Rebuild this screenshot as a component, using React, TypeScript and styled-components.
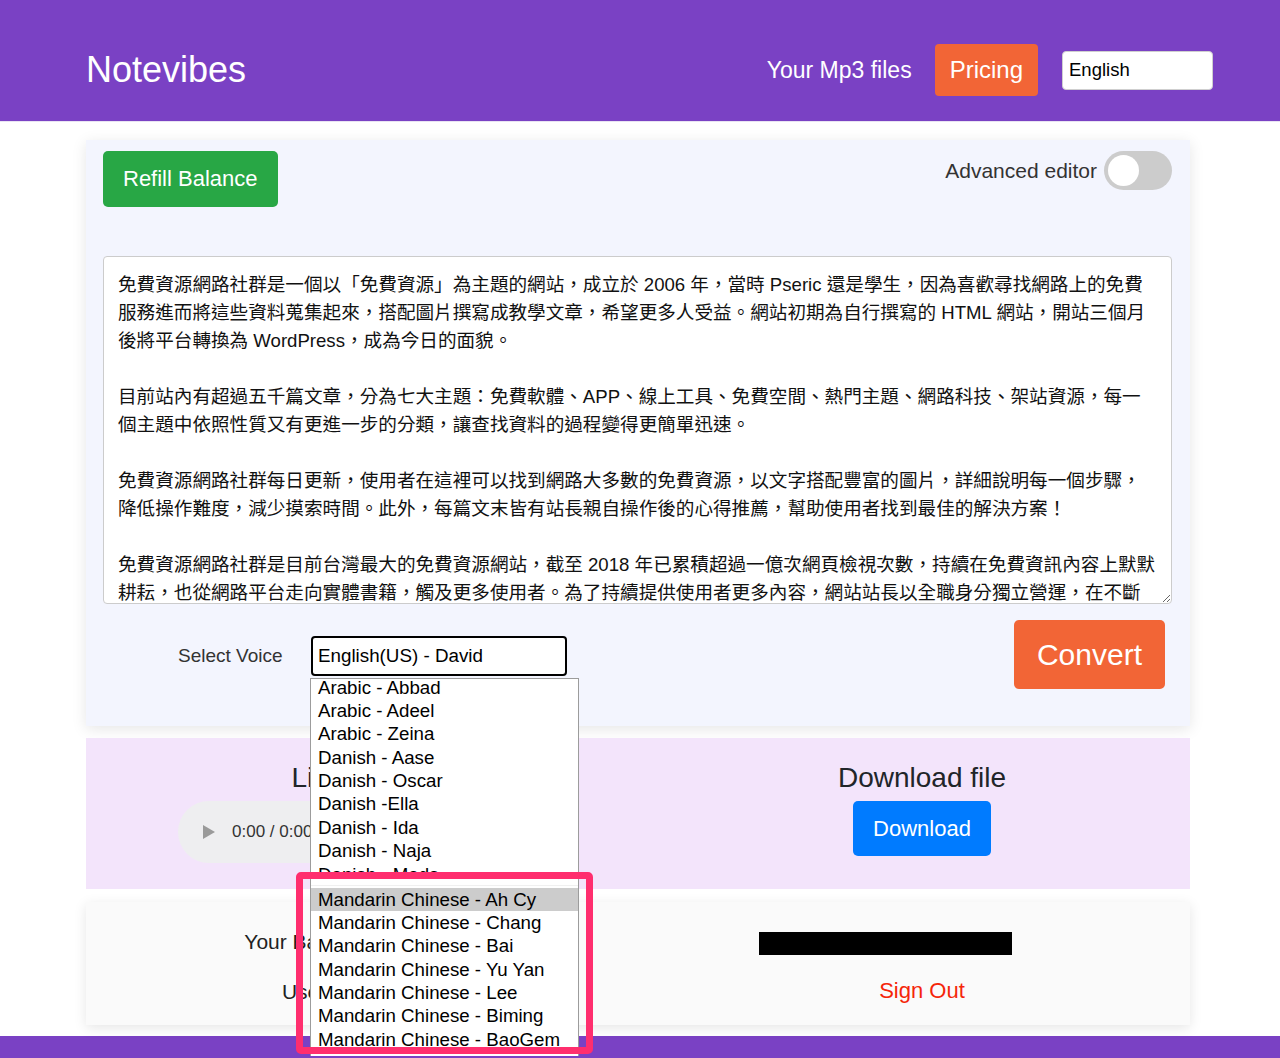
import React from "react";
import styled, { createGlobalStyle } from "styled-components";

const GlobalStyle = createGlobalStyle`
  html, body { margin: 0; padding: 0; background: #ffffff; }
  body { font-family: "Liberation Sans", "Noto Sans CJK TC", Arial, sans-serif; color: #212529; }
  * { box-sizing: border-box; }
`;

const PURPLE = "#7a41c4";
const ORANGE = "#f26536";

const Header = styled.header`
  height: 122px;
  background: ${PURPLE};
  display: flex;
  align-items: center;
  padding: 19px 67px 0 86px;
  border-bottom: 1px solid #e9e4f3;
`;

const Brand = styled.div`
  flex: 1;
  color: #fff;
  font-size: 36px;
  line-height: 1;
`;

const NavLink = styled.a`
  color: #fff;
  font-size: 23px;
  margin-right: 23px;
  text-decoration: none;
`;

const PricingButton = styled.button`
  height: 52px;
  padding: 0 15px;
  background: ${ORANGE};
  color: #fff;
  border: none;
  border-radius: 4px;
  font-family: inherit;
  font-size: 24px;
  margin-right: 24px;
`;

const LangSelect = styled.div`
  width: 151px;
  height: 39px;
  background: #fff;
  border: 1px solid #cfcfcf;
  border-radius: 4px;
  display: flex;
  align-items: center;
  padding-left: 6px;
  font-size: 18.5px;
  color: #000;
`;

const Main = styled.main`
  width: 1104px;
  margin: 18px 0 0 86px;
  display: flex;
  flex-direction: column;
`;

const EditorCard = styled.section`
  background: #f3f5fe;
  box-shadow: 0 3px 14px rgba(0, 0, 0, 0.1);
  padding: 11px 18px 37px 17px;
  display: flex;
  flex-direction: column;
`;

const TopRow = styled.div`
  display: flex;
  justify-content: space-between;
  align-items: flex-start;
`;

const Button = styled.button<{ $bg: string; $h: number; $fs: number; $px: number }>`
  background: ${(p) => p.$bg};
  height: ${(p) => p.$h}px;
  padding: 0 ${(p) => p.$px}px;
  font-size: ${(p) => p.$fs}px;
  color: #fff;
  border: none;
  border-radius: 5px;
  font-family: inherit;
  cursor: pointer;
`;

const ToggleGroup = styled.div`
  display: flex;
  align-items: center;
  gap: 7px;
  font-size: 21px;
  color: #333;
  height: 39px;
`;

const Toggle = styled.div`
  width: 68px;
  height: 39px;
  border-radius: 20px;
  background: #cccccc;
  display: flex;
  align-items: center;
  padding-left: 4px;
`;

const Knob = styled.div`
  width: 31px;
  height: 31px;
  border-radius: 50%;
  background: #fff;
`;

const TextArea = styled.textarea`
  margin-top: 49px;
  width: 1069px;
  height: 348px;
  background: #fff;
  border: 1px solid #ccc;
  border-radius: 4px;
  padding: 14px 14px;
  font-family: "Liberation Sans", "Noto Sans CJK TC", sans-serif;
  font-size: 18.6px;
  line-height: 28px;
  color: #111;
  overflow: hidden;
  white-space: pre-wrap;
`;

const VoiceRow = styled.div`
  margin-top: 16px;
  display: flex;
  align-items: center;
  padding-left: 75px;
  padding-right: 7px;
`;

const VoiceLabel = styled.span`
  font-size: 19px;
  color: #333;
  width: 133px;
  margin-top: 3px;
`;

const VoiceWrap = styled.div`
  position: relative;
  flex: 1;
  display: flex;
  align-items: center;
`;

const VoiceSelect = styled.div`
  width: 256px;
  height: 40px;
  border: 2px solid #000;
  border-radius: 4px;
  background: #fff;
  display: flex;
  align-items: center;
  padding-left: 5px;
  font-size: 18.8px;
  color: #000;
  margin-top: 2px;
`;

const Dropdown = styled.div`
  position: absolute;
  top: 44px;
  left: -1px;
  width: 269px;
  height: 378px;
  background: #fff;
  border: 1px solid #9c9c9c;
  border-bottom: none;
  overflow: hidden;
  z-index: 10;
  display: flex;
  flex-direction: column;
`;

const Segment = styled.div<{ $h?: number; $shift?: number }>`
  height: ${(p) => (p.$h ? `${p.$h}px` : "auto")};
  overflow: hidden;
  flex-shrink: 0;
  & > :first-child {
    margin-top: ${(p) => p.$shift ?? 0}px;
  }
`;

const Gap = styled.div`
  height: 14px;
  flex-shrink: 0;
  border-top: 9px solid #fff;
  border-bottom: 1px solid #f0f0f0;
`;

const Option = styled.div<{ $active?: boolean }>`
  height: 23.4px;
  line-height: 23.4px;
  padding-left: 7px;
  font-size: 18.7px;
  color: #000;
  white-space: nowrap;
  background: ${(p) => (p.$active ? "#cccccc" : "transparent")};
`;

const Highlight = styled.div`
  position: absolute;
  left: -15px;
  top: 238px;
  width: 297px;
  height: 182px;
  border: 7px solid #ff2e6e;
  border-radius: 5px;
  z-index: 11;
  pointer-events: none;
`;

const ListenCard = styled.section`
  margin-top: 12px;
  background: #f3e4fb;
  height: 151px;
  display: grid;
  grid-template-columns: 568px 1fr;
  padding-top: 23px;
`;

const Column = styled.div<{ $gap: number }>`
  display: flex;
  flex-direction: column;
  align-items: center;
  gap: ${(p) => p.$gap}px;
`;

const Title = styled.h3`
  margin: 0;
  font-size: 28px;
  font-weight: 500;
  line-height: 34px;
  color: #212529;
`;

const Audio = styled.div`
  width: 384px;
  height: 62px;
  border-radius: 31px;
  background: #eeeef0;
  display: flex;
  align-items: center;
  padding-left: 24px;
  gap: 16px;
  font-size: 17px;
  color: #333;
`;

const AccountCard = styled.section`
  margin-top: 13px;
  background: #fafafa;
  box-shadow: 0 3px 12px rgba(0, 0, 0, 0.1);
  height: 123px;
  display: grid;
  grid-template-columns: 568px 1fr;
  padding-top: 27px;
`;

const InfoText = styled.div`
  font-size: 21px;
  color: #222;
  line-height: 26px;
`;

const Redacted = styled.div`
  width: 253px;
  height: 23px;
  background: #000;
  margin-top: 3px;
  margin-left: -74px;
`;

const SignOut = styled.a`
  font-size: 22px;
  color: #f5260a;
  line-height: 26px;
  text-decoration: none;
`;

const Footer = styled.footer`
  margin-top: 11px;
  height: 60px;
  background: ${PURPLE};
`;

const ARTICLE = [
  "免費資源網路社群是一個以「免費資源」為主題的網站，成立於 2006 年，當時 Pseric 還是學生，因為喜歡尋找網路上的免費",
  "服務進而將這些資料蒐集起來，搭配圖片撰寫成教學文章，希望更多人受益。網站初期為自行撰寫的 HTML 網站，開站三個月",
  "後將平台轉換為 WordPress，成為今日的面貌。",
  "",
  "目前站內有超過五千篇文章，分為七大主題：免費軟體、APP、線上工具、免費空間、熱門主題、網路科技、架站資源，每一",
  "個主題中依照性質又有更進一步的分類，讓查找資料的過程變得更簡單迅速。",
  "",
  "免費資源網路社群每日更新，使用者在這裡可以找到網路大多數的免費資源，以文字搭配豐富的圖片，詳細說明每一個步驟，",
  "降低操作難度，減少摸索時間。此外，每篇文末皆有站長親自操作後的心得推薦，幫助使用者找到最佳的解決方案！",
  "",
  "免費資源網路社群是目前台灣最大的免費資源網站，截至 2018 年已累積超過一億次網頁檢視次數，持續在免費資訊內容上默默",
  "耕耘，也從網路平台走向實體書籍，觸及更多使用者。為了持續提供使用者更多內容，網站站長以全職身分獨立營運，在不斷",
  "努力下成為台灣最具影響力的免費資源網站之一。",
].join("\n");

const TOP_VOICES = [
  "Arabic - Abbad",
  "Arabic - Adeel",
  "Arabic - Zeina",
  "Danish - Aase",
  "Danish - Oscar",
  "Danish -Ella",
  "Danish - Ida",
  "Danish - Naja",
  "Danish - Mads",
];

const MANDARIN = [
  "Mandarin Chinese - Ah Cy",
  "Mandarin Chinese - Chang",
  "Mandarin Chinese - Bai",
  "Mandarin Chinese - Yu Yan",
  "Mandarin Chinese - Lee",
  "Mandarin Chinese - Biming",
  "Mandarin Chinese - BaoGem",
  "Philippines - Nicole",
];

const PlayIcon = () => (
  <svg width="14" height="16" viewBox="0 0 14 16" aria-hidden="true">
    <path d="M1 1 L13 8 L1 15 Z" fill="#9a9a9a" />
  </svg>
);

export default function App() {
  return (
    <>
      <GlobalStyle />
      <Header>
        <Brand>Notevibes</Brand>
        <NavLink href="#">Your Mp3 files</NavLink>
        <PricingButton>Pricing</PricingButton>
        <LangSelect>English</LangSelect>
      </Header>
      <Main>
        <EditorCard>
          <TopRow>
            <Button $bg="#28a745" $h={56} $fs={22} $px={20}>
              Refill Balance
            </Button>
            <ToggleGroup>
              Advanced editor
              <Toggle>
                <Knob />
              </Toggle>
            </ToggleGroup>
          </TopRow>
          <TextArea defaultValue={ARTICLE} spellCheck={false} />
          <VoiceRow>
            <VoiceLabel>Select Voice</VoiceLabel>
            <VoiceWrap>
              <VoiceSelect>English(US) - David</VoiceSelect>
              <Dropdown>
                <Segment $h={193} $shift={-3}>
                  {TOP_VOICES.map((v) => (
                    <Option key={v}>{v}</Option>
                  ))}
                </Segment>
                <Gap />
                <Segment $shift={2}>
                  {MANDARIN.map((v, i) => (
                    <Option key={v} $active={i === 0}>
                      {v}
                    </Option>
                  ))}
                </Segment>
              </Dropdown>
              <Highlight />
            </VoiceWrap>
            <Button $bg={ORANGE} $h={69} $fs={30} $px={23}>
              Convert
            </Button>
          </VoiceRow>
        </EditorCard>
        <ListenCard>
          <Column $gap={6}>
            <Title>Listen online</Title>
            <Audio>
              <PlayIcon />
              <span>0:00 / 0:00</span>
            </Audio>
          </Column>
          <Column $gap={6}>
            <Title>Download file</Title>
            <Button $bg="#007bff" $h={55} $fs={22} $px={20}>
              Download
            </Button>
          </Column>
        </ListenCard>
        <AccountCard>
          <Column $gap={24}>
            <InfoText>Your Balance: 0 characters</InfoText>
            <InfoText>Used characters: 0</InfoText>
          </Column>
          <Column $gap={23}>
            <Redacted />
            <SignOut href="#">Sign Out</SignOut>
          </Column>
        </AccountCard>
      </Main>
      <Footer />
    </>
  );
}
